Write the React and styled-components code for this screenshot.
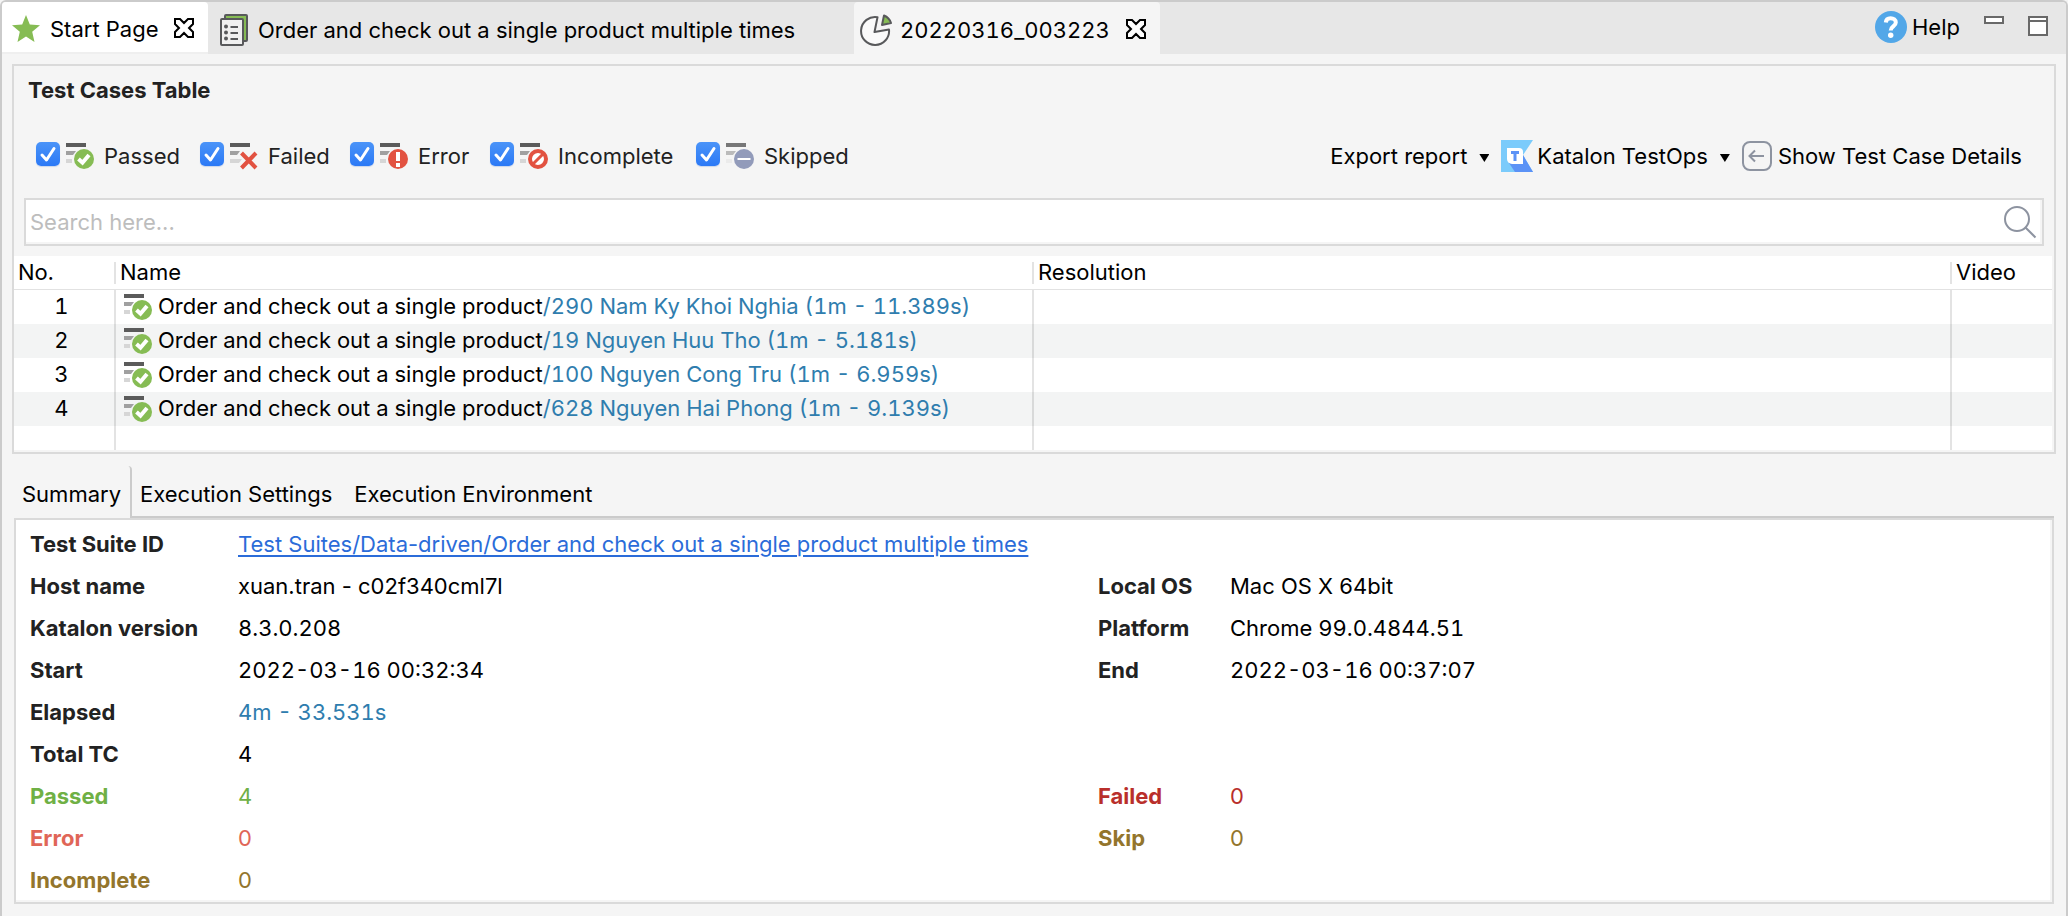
import React from "react";
import styled, { createGlobalStyle } from "styled-components";

const GlobalStyle = createGlobalStyle`
  *, *::before, *::after { box-sizing: border-box; }
  body {
    margin: 0;
    background: #f5f5f5;
    color: #000;
    font: 400 22px/34px Inter, "Liberation Sans", sans-serif;
  }
  button, input { font: inherit; color: inherit; font-variant-numeric: inherit; }
  svg { display: block; flex: none; }
`;

const Window = styled.div`
  min-height: 100vh;
  padding-bottom: 12px;
  border: 2px solid #cbcbcb;
  border-bottom: 0;
  border-radius: 6px 6px 0 0;
  background: #f5f5f5;
`;

const TabBar = styled.header`
  display: flex;
  height: 52px;
  background: #e7e7e7;
  border-radius: 4px 4px 0 0;
`;

const PlainButton = styled.button`
  display: flex;
  align-items: center;
  padding: 0;
  border: 0;
  background: none;
  white-space: nowrap;
  cursor: pointer;
`;

const EditorTab = styled.div`
  display: flex;
  align-items: center;
  width: ${(p) => p.$width};
  padding: 4px 6px 0 ${(p) => p.$inset};
  height: ${(p) => (p.$tone === "white" ? "50px" : "52px")};
  background: ${(p) => ({ white: "#fff", open: "#f5f5f5", none: "transparent" })[p.$tone]};
  box-shadow: ${(p) => (p.$tone === "white" ? "0 2px #efefef" : "none")};
  border-radius: 4px 4px 0 0;
  font-variant-numeric: ${(p) => (p.$tone === "open" ? "tabular-nums" : "normal")};
`;

const TabLabel = styled(PlainButton)`
  gap: ${(p) => p.$gap}px;
`;

const CloseButton = styled(PlainButton)`
  margin: 0 0 2px auto;
  padding: 0 8px;
`;

const WindowTools = styled.div`
  display: flex;
  align-items: flex-start;
  gap: 24px;
  margin-left: auto;
  padding: 8px 18px 0 0;
`;

const HelpButton = styled(PlainButton)`
  gap: 5px;
`;

const SizeButton = styled(PlainButton)`
  padding-top: 6px;
`;

const Panel = styled.section`
  margin: 10px 10px 0;
  padding: 0 2px 2px 0;
  border: 2px solid #dadada;
`;

const Title = styled.h2`
  margin: 0;
  padding: 7px 14px 0;
  font-size: 22px;
  line-height: 34px;
  font-weight: 700;
  color: #222;
`;

const Toolbar = styled.div`
  display: flex;
  align-items: center;
  justify-content: space-between;
  height: 34px;
  margin-top: 32px;
  padding: 0 30px 0 22px;
`;

const Filters = styled.div`
  display: grid;
  grid-template-columns: 164px 150px 140px 206px auto;
`;

const Filter = styled.label`
  display: flex;
  align-items: center;
  color: #222;
  white-space: nowrap;
`;

const CheckWrap = styled.span`
  position: relative;
  flex: none;
  width: 24px;
  height: 24px;
  margin: 0 6px 4px 0;
  svg {
    position: absolute;
    inset: 0;
    pointer-events: none;
  }
  input:not(:checked) + svg { display: none; }
`;

const Check = styled.input`
  appearance: none;
  display: block;
  width: 24px;
  height: 24px;
  margin: 0;
  border-radius: 5px;
  border: 1px solid #bbb;
  background: #fff;
  &:checked {
    border: 0;
    background: linear-gradient(#4b94f8, #2b79f6);
    box-shadow: 0 1px 1px #c9d6ec;
  }
`;

const FilterText = styled.span`
  margin-left: 10px;
`;

const Actions = styled.div`
  display: flex;
  align-items: center;
`;

const Action = styled(PlainButton)`
  gap: ${(p) => p.$gap}px;
  margin-left: 12px;
`;

const Caret = styled.span`
  width: 10px;
  height: 8px;
  margin: 4px 0 0 8px;
  background: #000;
  clip-path: polygon(0 0, 100% 0, 50% 100%);
`;

const SearchBox = styled.div`
  display: flex;
  align-items: center;
  height: 48px;
  margin: 25px 8px 0 10px;
  padding-right: 5px;
  border: 2px solid #dadada;
  background: #fff;
  box-shadow: inset -2px -2px #f5f5f5;
`;

const SearchInput = styled.input`
  flex: 1;
  min-width: 0;
  padding: 0 4px;
  border: 0;
  outline: 0;
  background: transparent;
  &::placeholder { color: #bdbdbd; opacity: 1; }
`;

const Table = styled.table`
  width: 100%;
  margin-top: 10px;
  border-collapse: separate;
  border-spacing: 0;
  table-layout: fixed;
  background: #fff;
  font-variant-numeric: tabular-nums;
`;

const Col = styled.col`
  width: ${(p) => p.$width};
`;

const HeadCell = styled.th`
  position: relative;
  height: 34px;
  padding: 0 4px;
  border-bottom: 1px solid #e2e2e2;
  font-weight: 400;
  line-height: 33px;
  text-align: left;
  &:not(:last-child)::after {
    content: "";
    position: absolute;
    top: 6px;
    right: 0;
    width: 2px;
    height: 22px;
    background: #e3e3e3;
  }
`;

const Row = styled.tr`
  height: ${(p) => (p.$filler ? 24 : 34)}px;
  line-height: ${(p) => (p.$filler ? 22 : 32)}px;
  background: ${(p) => (p.$striped ? "#f3f4f4" : "#fff")};
`;

const Cell = styled.td`
  padding: ${(p) => (p.$center ? "0 5px 2px 0" : "0 0 0 8px")};
  text-align: ${(p) => (p.$center ? "center" : "left")};
  &:not(:last-child) { border-right: 2px solid rgba(0, 0, 0, 0.11); }
`;

const CaseName = styled.div`
  display: flex;
  align-items: center;
  gap: 6px;
  height: 34px;
  white-space: nowrap;
`;

const CaseText = styled.span`
  padding-bottom: 2px;
`;

const CaseData = styled.span`
  color: #2f7dae;
`;

const DetailTabs = styled.div`
  display: flex;
  height: 52px;
  margin: 12px 12px 0 10px;
`;

const DetailTab = styled(PlainButton)`
  align-items: flex-start;
  padding: ${(p) => (p.$active ? "11px 9px 0 10px" : "11px 14px 0 8px")};
  border: solid #cbcbcb;
  border-width: ${(p) => (p.$active ? "0 2px 0 0" : "0 0 2px 0")};
  border-top-right-radius: ${(p) => (p.$active ? "4px" : "0")};
`;

const TabRule = styled.div`
  flex: 1;
  border-bottom: 2px solid #cbcbcb;
`;

const Summary = styled.dl`
  display: grid;
  grid-template-columns: 208px 860fr 132px 822fr;
  grid-auto-rows: 42px;
  align-items: center;
  margin: 0 12px;
  padding: 3px 0 1px 14px;
  border: 2px solid #dadada;
  background: #fff;
  box-shadow: inset -2px -2px #f5f5f5;
`;

const Term = styled.dt`
  grid-column: ${(p) => (p.$right ? 3 : 1)};
  font-weight: 700;
  color: ${(p) => p.$color || "#222"};
`;

const Value = styled.dd`
  margin: 0;
  white-space: nowrap;
  color: ${(p) => p.$color || "#000"};
  font-variant-numeric: ${(p) => (p.$numeric ? "tabular-nums" : "normal")};
`;

const SuiteLink = styled.a`
  color: #2b6cd9;
  text-decoration: underline;
  text-decoration-thickness: 2px;
  text-underline-offset: 3px;
`;

const StarIcon = () => (
  <svg width="28" height="28" viewBox="0 0 28 28">
    <path fill="#86bc54" d="M14 0l3.800 9.400L28 10.300l-7.800 6.500 2.300 10.200L14 21.600 5.500 27l2.300-10.200L0 10.300l10.200-.9z" />
  </svg>
);

const CloseIcon = () => (
  <svg width="20" height="20" viewBox="0 0 20 20">
    <path fill="#fff" stroke="#000" strokeWidth="2" d="M1 1H6L10 5L14 1H19V6L15 10L19 14V19H14L10 15L6 19H1V14L5 10L1 6Z" />
  </svg>
);

const SuiteIcon = () => (
  <svg width="28" height="32" viewBox="0 0 28 32" fill="none" stroke="#58595b" strokeWidth="2">
    <rect x="5" y="1" width="22" height="26" rx="1" fill="#86bc54" />
    <rect x="1" y="5" width="22" height="26" rx="1" fill="#f0f0f0" />
    <path d="M10.500 13H18M10.500 19H18M10.500 25H18" />
    <g fill="#58595b" stroke="none">
      <circle cx="6" cy="12.500" r="2" />
      <circle cx="6" cy="18.500" r="2" />
      <circle cx="6" cy="24.500" r="2" />
    </g>
  </svg>
);

const ReportIcon = () => (
  <svg width="32" height="32" viewBox="0 0 32 32" stroke="#58595b" strokeWidth="2" strokeLinejoin="round">
    <path fill="#fafafa" d="M17.500 3.200A14 14 0 1 0 29 15.500L14.500 18z" />
    <path fill="#86bc54" d="M24 1.500L22 11l9-2A12 12 0 0 0 24 1.500z" />
  </svg>
);

const HelpIcon = () => (
  <svg width="32" height="32" viewBox="0 0 32 32">
    <circle cx="16" cy="16" r="16" fill="#52a7e8" />
    <path fill="none" stroke="#fff" strokeWidth="4" d="M10.800 11.500C11 8.500 13 7.200 15.600 7.200c3 0 5.200 1.500 5.200 4.200 0 4-5.100 4-5.100 8" />
    <circle cx="15.700" cy="24.300" r="2.700" fill="#fff" />
  </svg>
);

const MinimizeIcon = () => (
  <svg width="20" height="8" viewBox="0 0 20 8">
    <rect x="1" y="1" width="18" height="6" fill="#fff" stroke="#696969" strokeWidth="2" />
  </svg>
);

const MaximizeIcon = () => (
  <svg width="20" height="20" viewBox="0 0 20 20">
    <path fill="#fff" stroke="#696969" strokeWidth="2" d="M1 1h18v18H1zM1 5h18" />
  </svg>
);

const badges = {
  passed: (
    <>
      <circle cx="18" cy="17" r="10" fill="#86bc54" />
      <path fill="none" stroke="#fff" strokeWidth="4" d="M12.500 17l4 3.700L23 13" />
    </>
  ),
  failed: <path fill="none" stroke="#e25241" strokeWidth="4" d="M11.500 11l14.500 15M26 11L11.500 26" />,
  error: (
    <>
      <circle cx="18" cy="17" r="10" fill="#e25241" />
      <path fill="#fff" d="M16 10h4v9h-4zM16 21h4v4h-4z" />
    </>
  ),
  incomplete: (
    <>
      <circle cx="18" cy="17" r="8" fill="#fff" stroke="#e25241" strokeWidth="4" />
      <path stroke="#e25241" strokeWidth="3" d="M12.500 22.500l11-11" />
    </>
  ),
  skipped: (
    <>
      <circle cx="18" cy="17" r="10" fill="#929bba" />
      <path fill="#fff" d="M11.500 16h13v2h-13z" />
    </>
  ),
};

const StatusIcon = ({ status }) => (
  <svg width="28" height="28" viewBox="0 0 28 28">
    <path fill={status === "skipped" ? "#777" : "#5b5b5b"} d="M0 1h20v4H0z" />
    <path fill={status === "skipped" ? "#bbb" : "#a0a0a0"} d="M0 9h10l-3 4H0z" />
    <path fill={status === "skipped" ? "#ebebeb" : "#d6d6d6"} d={status === "failed" ? "M0 17h12l-3 4H0z" : "M0 17h6v4H0z"} />
    {badges[status]}
  </svg>
);

const TickIcon = () => (
  <svg width="24" height="24" viewBox="0 0 24 24">
    <path fill="none" stroke="#fff" strokeWidth="3" strokeLinecap="round" strokeLinejoin="round" d="M6 13l4.500 5L18 6.500" />
  </svg>
);

const TestOpsIcon = () => (
  <svg width="32" height="32" viewBox="0 0 32 32">
    <path fill="#7bcbfb" d="M0 0h32L22 15l10 17H0z" />
    <path fill="#5b92f6" d="M8 23l14-8 10 17H14z" />
    <path fill="#fff" d="M6 8h12a4 4 0 0 1 4 4v12H11a5 5 0 0 1-5-5z" />
    <path fill="#5b92f6" d="M10 11h8v3h-2.500v7h-3v-7H10z" />
  </svg>
);

const DetailsIcon = () => (
  <svg width="30" height="30" viewBox="0 0 30 30" fill="none" stroke="#8d93a0" strokeWidth="2">
    <rect x="1" y="1" width="28" height="28" rx="7" />
    <path d="M22 15H8M13 9.500L7.500 15l5.500 5.500" />
  </svg>
);

const SearchIcon = () => (
  <svg width="34" height="34" viewBox="0 0 34 34" fill="none" stroke="#8d93a0" strokeWidth="2">
    <circle cx="14" cy="14" r="12" />
    <path d="M22.500 22.500L32.500 32.500" />
  </svg>
);

const filters = ["Passed", "Failed", "Error", "Incomplete", "Skipped"];

const cases = [
  "/290 Nam Ky Khoi Nghia (1m - 11.389s)",
  "/19 Nguyen Huu Tho (1m - 5.181s)",
  "/100 Nguyen Cong Tru (1m - 6.959s)",
  "/628 Nguyen Hai Phong (1m - 9.139s)",
];

const summary = [
  { label: "Host name", value: "xuan.tran - c02f340cml7l" },
  { label: "Local OS", value: "Mac OS X 64bit", right: true },
  { label: "Katalon version", value: "8.3.0.208", numeric: true },
  { label: "Platform", value: "Chrome 99.0.4844.51", right: true, numeric: true },
  { label: "Start", value: "2022-03-16 00:32:34", numeric: true },
  { label: "End", value: "2022-03-16 00:37:07", right: true, numeric: true },
  { label: "Elapsed", value: "4m - 33.531s", valueColor: "#2f7dae", numeric: true },
  { label: "Total TC", value: "4" },
  { label: "Passed", value: "4", color: "#6fb045" },
  { label: "Failed", value: "0", color: "#b92f2b", right: true },
  { label: "Error", value: "0", color: "#e06657" },
  { label: "Skip", value: "0", color: "#93752c", right: true },
  { label: "Incomplete", value: "0", color: "#93752c" },
];

const FilterBox = ({ name }) => (
  <Filter>
    <CheckWrap>
      <Check type="checkbox" defaultChecked />
      <TickIcon />
    </CheckWrap>
    <StatusIcon status={name.toLowerCase()} />
    <FilterText>{name}</FilterText>
  </Filter>
);

export default function App() {
  return (
    <>
      <GlobalStyle />
      <Window>
        <TabBar>
          <EditorTab $tone="white" $width="206px" $inset="10px">
            <TabLabel $gap={10}><StarIcon />Start Page</TabLabel>
            <CloseButton aria-label="Close Start Page"><CloseIcon /></CloseButton>
          </EditorTab>
          <EditorTab $tone="none" $width="646px" $inset="12px">
            <TabLabel $gap={10}><SuiteIcon />Order and check out a single product multiple times</TabLabel>
          </EditorTab>
          <EditorTab $tone="open" $width="306px" $inset="6px">
            <TabLabel $gap={8}><ReportIcon />20220316_003223</TabLabel>
            <CloseButton aria-label="Close 20220316_003223"><CloseIcon /></CloseButton>
          </EditorTab>
          <WindowTools>
            <HelpButton><HelpIcon />Help</HelpButton>
            <SizeButton aria-label="Minimize"><MinimizeIcon /></SizeButton>
            <SizeButton aria-label="Maximize"><MaximizeIcon /></SizeButton>
          </WindowTools>
        </TabBar>

        <Panel>
          <Title>Test Cases Table</Title>
          <Toolbar>
            <Filters>
              {filters.map((name) => <FilterBox key={name} name={name} />)}
            </Filters>
            <Actions>
              <Action $gap={4}>Export report<Caret /></Action>
              <Action $gap={4}><TestOpsIcon />Katalon TestOps<Caret /></Action>
              <Action $gap={6}><DetailsIcon />Show Test Case Details</Action>
            </Actions>
          </Toolbar>
          <SearchBox>
            <SearchInput type="text" placeholder="Search here..." aria-label="Search test cases" />
            <PlainButton aria-label="Search"><SearchIcon /></PlainButton>
          </SearchBox>
          <Table>
            <colgroup>
              <Col $width="102px" />
              <Col $width="auto" />
              <Col $width="auto" />
              <Col $width="100px" />
            </colgroup>
            <thead>
              <tr>
                <HeadCell>No.</HeadCell>
                <HeadCell>Name</HeadCell>
                <HeadCell>Resolution</HeadCell>
                <HeadCell>Video</HeadCell>
              </tr>
            </thead>
            <tbody>
              {cases.map((data, i) => (
                <Row key={data} $striped={i % 2 === 1}>
                  <Cell $center>{i + 1}</Cell>
                  <Cell>
                    <CaseName>
                      <StatusIcon status="passed" />
                      <CaseText>Order and check out a single product<CaseData>{data}</CaseData></CaseText>
                    </CaseName>
                  </Cell>
                  <Cell />
                  <Cell />
                </Row>
              ))}
              <Row $filler aria-hidden="true">
                <Cell /><Cell /><Cell /><Cell />
              </Row>
            </tbody>
          </Table>
        </Panel>

        <DetailTabs role="tablist">
          <DetailTab role="tab" aria-selected="true" $active>Summary</DetailTab>
          <DetailTab role="tab" aria-selected="false">Execution Settings</DetailTab>
          <DetailTab role="tab" aria-selected="false">Execution Environment</DetailTab>
          <TabRule />
        </DetailTabs>

        <Summary>
          <Term>Test Suite ID</Term>
          <Value>
            <SuiteLink href="#suite">Test Suites/Data-driven/Order and check out a single product multiple times</SuiteLink>
          </Value>
          {summary.map(({ label, value, color, valueColor, right, numeric }) => (
            <React.Fragment key={label}>
              <Term $right={right} $color={color}>{label}</Term>
              <Value $color={valueColor || color} $numeric={numeric}>{value}</Value>
            </React.Fragment>
          ))}
        </Summary>
      </Window>
    </>
  );
}
